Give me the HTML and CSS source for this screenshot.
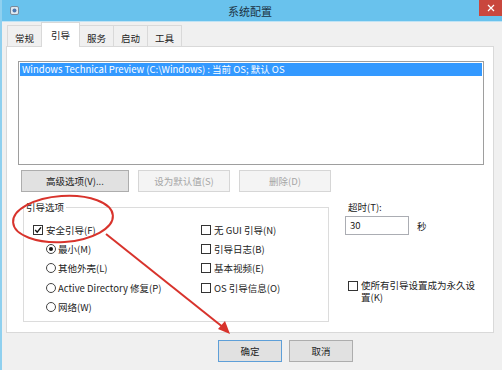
FILE: index.html
```html
<!DOCTYPE html>
<html lang="zh-CN">
<head>
  <meta charset="UTF-8" />
  <meta name="viewport" content="width=device-width, initial-scale=1.0"/>
  <title>系统配置</title>
  <link rel="stylesheet" href="styles.css">
</head>
<body>
  <div class="window">
    <div class="titlebar">
      <span class="app-icon">
        <svg width="9" height="9" viewBox="0 0 9 9">
          <rect x="0.5" y="0.5" width="8" height="8" rx="1.5" fill="#dfe8f0" stroke="#7a8a9a"/>
          <circle cx="4.5" cy="4.5" r="2" fill="#4a78b0"/>
        </svg>
      </span>
      <span class="title">系统配置</span>
      <span class="close-btn">
        <svg width="8" height="8" viewBox="0 0 8 8">
          <path d="M1 1 L7 7 M7 1 L1 7" stroke="#fff" stroke-width="1.2"/>
        </svg>
      </span>
    </div>

    <div class="tabs">
      <div class="tab">常规</div>
      <div class="tab active">引导</div>
      <div class="tab">服务</div>
      <div class="tab">启动</div>
      <div class="tab">工具</div>
    </div>

    <div class="panel">
      <div class="boot-list">
        <div class="boot-item selected">Windows Technical Preview (C:\Windows) : 当前 OS; 默认 OS</div>
      </div>

      <div class="list-actions">
        <button class="btn btn-advanced">高级选项(V)...</button>
        <button class="btn btn-small" disabled>设为默认值(S)</button>
        <button class="btn btn-small" disabled>删除(D)</button>
      </div>

      <div class="options">
        <fieldset class="group">
          <legend>引导选项</legend>
          <div class="group-cols">
            <div class="col">
              <div class="opt"><span class="box checked"><svg width="8" height="8" viewBox="0 0 8 8"><path d="M1.2 4 L3.2 6.2 L7 1.4" fill="none" stroke="#111" stroke-width="1.4"/></svg></span>安全引导(F)</div>
              <div class="opt sub"><span class="radio checked"></span>最小(M)</div>
              <div class="opt sub"><span class="radio"></span>其他外壳(L)</div>
              <div class="opt sub"><span class="radio"></span>Active Directory 修复(P)</div>
              <div class="opt sub"><span class="radio"></span>网络(W)</div>
            </div>
            <div class="col">
              <div class="opt"><span class="box"></span>无 GUI 引导(N)</div>
              <div class="opt"><span class="box"></span>引导日志(B)</div>
              <div class="opt"><span class="box"></span>基本视频(E)</div>
              <div class="opt"><span class="box"></span>OS 引导信息(O)</div>
            </div>
          </div>
        </fieldset>

        <div class="side">
          <div class="timeout-label">超时(T):</div>
          <div class="timeout-row">
            <span class="timeout-input">30</span>
            <span>秒</span>
          </div>
          <div class="permanent">
            <span class="box"></span>
            <span class="permanent-text">使所有引导设置成为永久设置(K)</span>
          </div>
        </div>
      </div>
    </div>

    <div class="dialog-buttons">
      <button class="btn btn-dialog btn-default">确定</button>
      <button class="btn btn-dialog">取消</button>
    </div>

    <!-- red markup drawn over the dialog -->
    <svg class="annotation" width="502" height="370" viewBox="0 0 502 370">
      <ellipse cx="63" cy="219" rx="50" ry="23" transform="rotate(-4 63 219)" fill="none" stroke="#d8332c" stroke-width="2"/>
      <line x1="106" y1="234" x2="224" y2="328" stroke="#d8332c" stroke-width="2"/>
      <polygon points="230,334 218,329 225,321" fill="#d8332c"/>
    </svg>
  </div>
</body>
</html>
```

FILE: styles.css
```css
body {
  margin: 0;
  font-family: "Noto Sans CJK SC", "Liberation Sans", sans-serif;
  font-size: 9.5px;
  color: #222;
}
.window {
  position: relative;
  width: 502px;
  height: 370px;
  box-sizing: border-box;
  border-left: 2px solid #8fd0ef;
  background: #f0f0f0;
  overflow: hidden;
}
.titlebar {
  height: 21px;
  background: #69c2ed;
  border-bottom: 1px solid #bfe3f5;
  display: grid;
  grid-template-columns: 1fr auto 1fr;
  align-items: center;
}
.app-icon {
  display: flex;
  padding-left: 8px;
}
.title {
  font-size: 11px;
  color: #1c3344;
  margin-left: -4px;
}
.close-btn {
  justify-self: end;
  align-self: start;
  width: 23px;
  height: 16px;
  background: #c9473d;
  display: flex;
  align-items: center;
  justify-content: center;
}
.tabs {
  display: flex;
  align-items: flex-end;
  height: 24px;
  padding-left: 5px;
}
.tab {
  height: 21px;
  box-sizing: border-box;
  padding: 3px 7px 0;
  display: flex;
  align-items: center;
  border: 1px solid #d9d9d9;
  border-bottom: none;
  margin-right: -1px;
  background: #f0f0f0;
}
.tab.active {
  height: 25px;
  padding: 0 9px;
  background: #fff;
  position: relative;
  z-index: 1;
  margin-bottom: -1px;
}
.panel {
  height: 287px;
  box-sizing: border-box;
  margin: 0 8px 0 4px;
  padding: 14px 10px 0 11px;
  background: #fff;
  border: 1px solid #d9d9d9;
}
.boot-list {
  width: 466px;
  height: 104px;
  box-sizing: border-box;
  border: 1px solid #9e9e9e;
  padding: 1px;
}
.boot-item {
  height: 13px;
  line-height: 13px;
  padding-left: 2px;
  white-space: nowrap;
}
.boot-item.selected {
  background: #3399ff;
  color: #fff;
}
.list-actions {
  display: flex;
  gap: 9px;
  margin-top: 5px;
  padding-left: 3px;
}
.btn {
  height: 22px;
  font-family: inherit;
  font-size: 9.5px;
  color: #222;
  background: #e1e1e1;
  border: 1px solid #adadad;
  padding: 0;
}
.btn:disabled {
  background: #f4f4f4;
  border-color: #d6d6d6;
  color: #a6a6a6;
}
.btn-advanced {
  width: 108px;
}
.btn-small {
  width: 92px;
}
.options {
  display: flex;
  margin-top: 8px;
  padding-left: 5px;
}
.group {
  width: 307px;
  height: 122px;
  box-sizing: border-box;
  margin: 0;
  padding: 6px 0 0 0;
  border: 1px solid #dcdcdc;
}
.group legend {
  padding: 0 2px;
  line-height: 14px;
}
.group-cols {
  display: grid;
  grid-template-columns: 168px 1fr;
  padding-left: 9px;
}
.opt {
  display: flex;
  align-items: center;
  height: 19.3px;
  white-space: nowrap;
}
.opt.sub {
  padding-left: 13px;
}
.box {
  width: 10px;
  height: 10px;
  box-sizing: border-box;
  border: 1px solid #333;
  background: #fff;
  margin-right: 3px;
  display: flex;
  align-items: center;
  justify-content: center;
  flex-shrink: 0;
}
.radio {
  width: 10px;
  height: 10px;
  box-sizing: border-box;
  border: 1px solid #444;
  border-radius: 50%;
  background: #fff;
  margin-right: 2px;
  display: flex;
  align-items: center;
  justify-content: center;
}
.radio.checked::after {
  content: "";
  width: 4px;
  height: 4px;
  border-radius: 50%;
  background: #111;
}
.side {
  margin-left: 16px;
}
.timeout-label {
  line-height: 14px;
  padding-left: 3px;
}
.timeout-row {
  display: flex;
  align-items: center;
  gap: 8px;
  margin-top: 2px;
}
.timeout-input {
  width: 64px;
  height: 19px;
  box-sizing: border-box;
  border: 1px solid #abadb3;
  padding-left: 4px;
  line-height: 17px;
  background: #fff;
}
.permanent {
  display: flex;
  align-items: flex-start;
  margin-top: 44px;
  padding-left: 3px;
}
.permanent .box {
  margin-top: 2px;
}
.permanent-text {
  width: 122px;
  line-height: 12px;
}
.dialog-buttons {
  display: flex;
  justify-content: flex-end;
  gap: 7px;
  margin-top: 7px;
  padding-right: 149px;
}
.btn-dialog {
  width: 64px;
}
.btn-default {
  border-color: #5e9fd8;
}
.annotation {
  position: absolute;
  top: 0;
  left: -2px;
  pointer-events: none;
}
```
